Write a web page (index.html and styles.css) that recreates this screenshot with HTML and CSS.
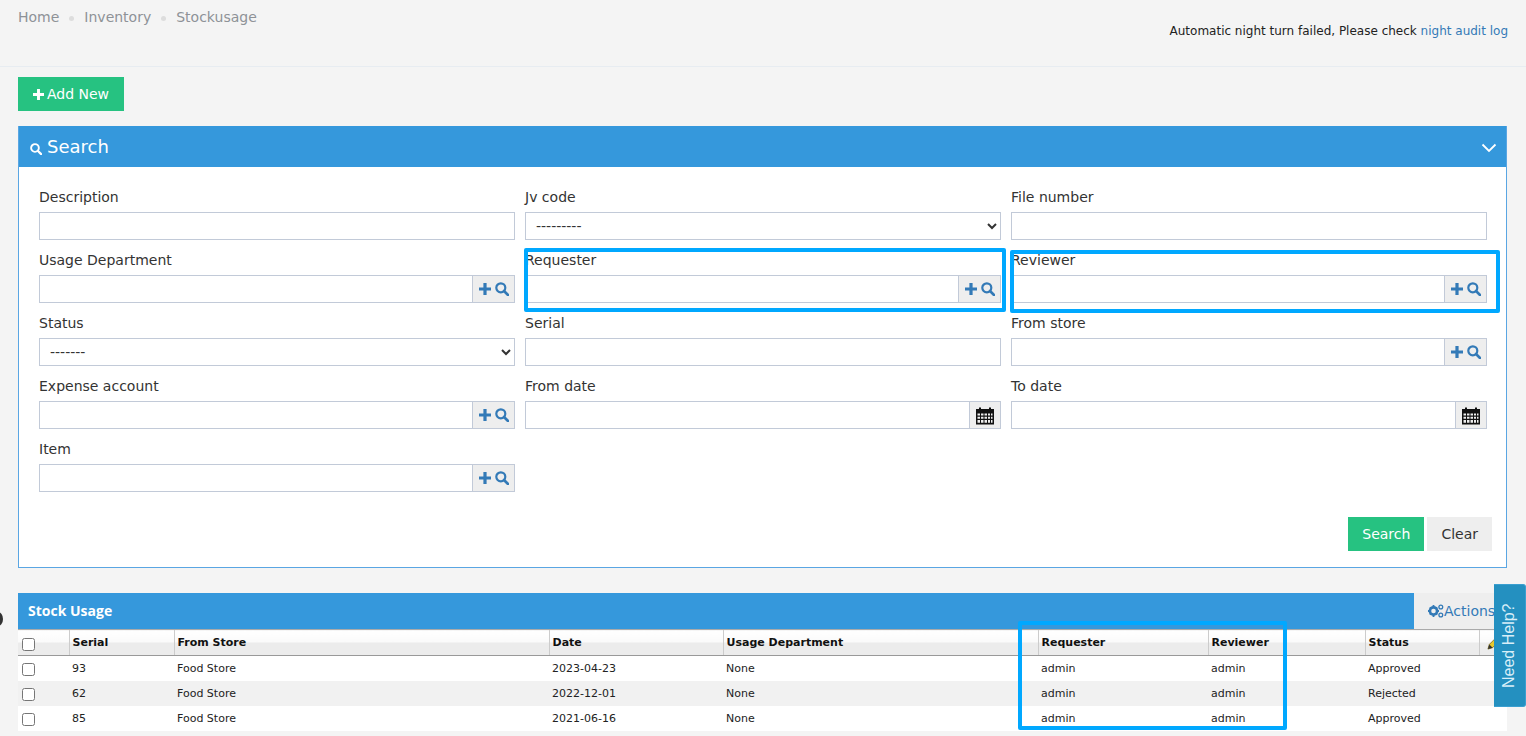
FILE: index.html
```html
<!DOCTYPE html>
<html lang="en">
<head>
  <meta charset="UTF-8">
  <title>Stockusage</title>
  <link rel="stylesheet" href="styles.css">
</head>
<body>
  <svg class="sprites" width="0" height="0" aria-hidden="true">
    <symbol id="i-plus" viewBox="0 0 12 12"><path d="M4.4 0h3.2v4.4H12v3.2H7.6V12H4.4V7.6H0V4.4h4.4z" fill="currentColor"/></symbol>
    <symbol id="i-search" viewBox="0 0 14 14"><circle cx="5.8" cy="5.8" r="4.5" fill="none" stroke="currentColor" stroke-width="2.2"/><path d="M9 9l4 4" stroke="currentColor" stroke-width="2.6" stroke-linecap="round"/></symbol>
    <symbol id="i-calendar" viewBox="0 0 18 18"><path d="M0 2.5h3V1h2v1.500h8V1h2v1.500h3V18H0z" fill="#111"/><path d="M1.500 7h2.500v2H1.500zM5 7h2.500v2H5zM8.500 7H11v2H8.500zM12 7h2v2h-2zM15 7h1.500v2H15zM1.500 10.200h2.500v2H1.500zM5 10.200h2.500v2H5zM8.500 10.200H11v2H8.500zM12 10.200h2v2h-2zM15 10.200h1.500v2H15zM1.500 13.400h2.500v2.800H1.500zM5 13.400h2.500v2.800H5zM8.500 13.400H11v2.800H8.500zM12 13.400h2v2.800h-2zM15 13.400h1.500v2.800H15z" fill="#eee"/></symbol>
    <symbol id="i-cogs" viewBox="0 0 16 14"><circle cx="5.500" cy="7" r="3.600" fill="none" stroke="currentColor" stroke-width="2.600"/><path d="M5.500 1v2M5.500 11v2M0 7h2M9 7h2M1.800 3.300l1.400 1.400M8 9.500l1.200 1.200M1.800 10.700l1.400-1.400M8 4.500l1.200-1.200" stroke="currentColor" stroke-width="1.800"/><circle cx="12.800" cy="3" r="1.900" fill="none" stroke="currentColor" stroke-width="1.300"/><circle cx="12.800" cy="11" r="1.900" fill="none" stroke="currentColor" stroke-width="1.300"/></symbol>
  </svg>

  <header class="page-head">
    <ul class="crumbs">
      <li>Home</li>
      <li>Inventory</li>
      <li>Stockusage</li>
    </ul>
    <p class="night-note">Automatic night turn failed, Please check <a href="#">night audit log</a></p>
  </header>

  <main class="content">
    <button class="btn btn-green btn-add"><svg class="ico-plus"><use href="#i-plus"/></svg>Add New</button>

    <section class="search-panel">
      <div class="search-title">
        <h2><svg class="ico-title"><use href="#i-search"/></svg>Search</h2>
        <svg class="chevron" viewBox="0 0 16 10"><path d="M1.500 1.500L8 8l6.500-6.500" fill="none" stroke="#fff" stroke-width="1.800"/></svg>
      </div>
      <form class="search-body">
        <div class="form-grid">
          <div class="field">
            <label>Description</label>
            <input type="text">
          </div>
          <div class="field">
            <label>Jv code</label>
            <select><option>---------</option></select>
          </div>
          <div class="field">
            <label>File number</label>
            <input type="text">
          </div>

          <div class="field">
            <label>Usage Department</label>
            <div class="input-group">
              <input type="text">
              <span class="addon"><svg class="ico-plus"><use href="#i-plus"/></svg><svg class="ico-search"><use href="#i-search"/></svg></span>
            </div>
          </div>
          <div class="field">
            <label>Requester</label>
            <div class="input-group">
              <input type="text">
              <span class="addon"><svg class="ico-plus"><use href="#i-plus"/></svg><svg class="ico-search"><use href="#i-search"/></svg></span>
            </div>
          </div>
          <div class="field">
            <label>Reviewer</label>
            <div class="input-group">
              <input type="text">
              <span class="addon"><svg class="ico-plus"><use href="#i-plus"/></svg><svg class="ico-search"><use href="#i-search"/></svg></span>
            </div>
          </div>

          <div class="field">
            <label>Status</label>
            <select><option>-------</option></select>
          </div>
          <div class="field">
            <label>Serial</label>
            <input type="text">
          </div>
          <div class="field">
            <label>From store</label>
            <div class="input-group">
              <input type="text">
              <span class="addon"><svg class="ico-plus"><use href="#i-plus"/></svg><svg class="ico-search"><use href="#i-search"/></svg></span>
            </div>
          </div>

          <div class="field">
            <label>Expense account</label>
            <div class="input-group">
              <input type="text">
              <span class="addon"><svg class="ico-plus"><use href="#i-plus"/></svg><svg class="ico-search"><use href="#i-search"/></svg></span>
            </div>
          </div>
          <div class="field">
            <label>From date</label>
            <div class="input-group">
              <input type="text">
              <span class="addon addon-date"><svg class="ico-cal"><use href="#i-calendar"/></svg></span>
            </div>
          </div>
          <div class="field">
            <label>To date</label>
            <div class="input-group">
              <input type="text">
              <span class="addon addon-date"><svg class="ico-cal"><use href="#i-calendar"/></svg></span>
            </div>
          </div>

          <div class="field">
            <label>Item</label>
            <div class="input-group">
              <input type="text">
              <span class="addon"><svg class="ico-plus"><use href="#i-plus"/></svg><svg class="ico-search"><use href="#i-search"/></svg></span>
            </div>
          </div>
        </div>
        <div class="form-actions">
          <button type="button" class="btn btn-green">Search</button>
          <button type="button" class="btn btn-grey">Clear</button>
        </div>
      </form>
    </section>

    <section class="usage">
      <div class="usage-bar">
        <h3>Stock Usage</h3>
        <a class="actions" href="#"><svg class="ico-cogs"><use href="#i-cogs"/></svg>Actions</a>
      </div>
      <table class="usage-table">
        <colgroup>
          <col class="c-check"><col class="c-serial"><col class="c-store"><col class="c-date"><col class="c-dept"><col class="c-req"><col class="c-rev"><col class="c-status"><col class="c-edit">
        </colgroup>
        <thead>
          <tr>
            <th><input type="checkbox"></th>
            <th>Serial</th>
            <th>From Store</th>
            <th>Date</th>
            <th>Usage Department</th>
            <th>Requester</th>
            <th>Reviewer</th>
            <th>Status</th>
            <th><svg class="ico-pencil" viewBox="0 0 16 16"><path d="M1 15l1.500-5L11 1.500 14.500 5 6 13.500z" fill="#e8c92c" stroke="#6b5a10" stroke-width=".8"/><path d="M1 15l1.500-5 3.500 3.500z" fill="#333"/></svg></th>
          </tr>
        </thead>
        <tbody>
          <tr>
            <td><input type="checkbox"></td><td>93</td><td>Food Store</td><td>2023-04-23</td><td>None</td><td>admin</td><td>admin</td><td>Approved</td><td></td>
          </tr>
          <tr>
            <td><input type="checkbox"></td><td>62</td><td>Food Store</td><td>2022-12-01</td><td>None</td><td>admin</td><td>admin</td><td>Rejected</td><td></td>
          </tr>
          <tr>
            <td><input type="checkbox"></td><td>85</td><td>Food Store</td><td>2021-06-16</td><td>None</td><td>admin</td><td>admin</td><td>Approved</td><td></td>
          </tr>
        </tbody>
      </table>
    </section>
  </main>

  <!-- annotation boxes drawn over the screenshot -->
  <div class="mark mark-requester"></div>
  <div class="mark mark-reviewer"></div>
  <div class="mark mark-columns"></div>

  <div class="edge-dot"></div>
  <a class="need-help" href="#">Need Help?</a>
</body>
</html>
```

FILE: styles.css
```css
html, body {
  height: 736px;
  overflow: hidden;
}
body {
  margin: 0;
  position: relative;
  background-color: #f4f4f4;
  color: #333;
  font-family: 'DejaVu Sans', sans-serif;
  font-size: 14px;
}
.sprites {
  position: absolute;
}
.page-head {
  height: 66px;
  box-sizing: content-box;
  border-bottom: 1px solid #e7ecf1;
  padding: 0 18px;
  display: flex;
  justify-content: space-between;
}
.crumbs {
  list-style: none;
  margin: 0;
  padding: 8px 0 0;
  display: flex;
  color: #8e9297;
  line-height: 18px;
}
.crumbs li + li::before {
  content: "";
  display: inline-block;
  width: 5px;
  height: 5px;
  border-radius: 50%;
  background-color: #ddd;
  margin: 0 10px;
  vertical-align: middle;
}
.night-note {
  margin: 22px 0 0;
  font-size: 12px;
  line-height: 18px;
  color: #222;
}
.night-note a {
  color: #337ab7;
  text-decoration: none;
}
.content {
  padding: 10px 19px 0 18px;
}
.btn {
  height: 34px;
  border: none;
  padding: 0 14px;
  font-family: inherit;
  font-size: 14px;
  cursor: pointer;
}
.btn-green {
  background-color: #26c281;
  color: #fff;
}
.btn-grey {
  background-color: #eee;
  color: #333;
}
.btn-add {
  display: block;
  width: 106px;
  padding: 0;
}
.btn-add .ico-plus {
  width: 11px;
  height: 11px;
  margin: 0 3px 0 0;
  color: #fff;
  vertical-align: -1px;
}
.search-panel {
  margin-top: 15px;
  border: 1px solid #5aa6e3;
  border-top: none;
  background-color: #fff;
}
.search-title {
  height: 41px;
  background-color: #3598dc;
  color: #fff;
  display: flex;
  align-items: center;
  justify-content: space-between;
  padding: 0 9px 0 11px;
}
.search-title h2 {
  margin: 0;
  font-size: 18px;
  font-weight: normal;
}
.ico-title {
  width: 12px;
  height: 12px;
  margin-right: 5px;
  color: #fff;
  vertical-align: -2px;
}
.chevron {
  width: 16px;
  height: 10px;
  margin-top: 2px;
}
.search-body {
  padding: 20px 19px 16px 20px;
}
.form-grid {
  display: grid;
  grid-template-columns: repeat(3, 476px);
  gap: 10px;
}
.field label {
  display: block;
  line-height: 20px;
  margin-bottom: 5px;
}
.field input[type=text],
.field select {
  display: block;
  width: 100%;
  height: 28px;
  box-sizing: border-box;
  border: 1px solid #c2cad8;
  background-color: #fff;
  font-family: inherit;
  font-size: 14px;
  color: #333;
  padding: 0 6px;
  border-radius: 0;
}
.input-group {
  display: flex;
}
.input-group input[type=text] {
  flex: 1;
  min-width: 0;
}
.addon {
  flex: none;
  width: 42px;
  height: 28px;
  box-sizing: border-box;
  border: 1px solid #c2cad8;
  border-left: none;
  background-color: #eee;
  display: flex;
  align-items: center;
  justify-content: center;
  gap: 4px;
  color: #337ab7;
}
.addon-date {
  width: 31px;
}
.ico-plus {
  width: 12px;
  height: 12px;
}
.ico-search {
  width: 14px;
  height: 14px;
}
.ico-cal {
  width: 18px;
  height: 19px;
}
.form-actions {
  display: flex;
  justify-content: flex-end;
  gap: 3px;
  margin: 25px -5px 0 0;
}
.usage {
  margin-top: 25px;
}
.usage-bar {
  height: 36px;
  display: flex;
  background-color: #3598dc;
  color: #fff;
}
.usage-bar h3 {
  flex: 1;
  margin: 0;
  padding-left: 10px;
  font-family: 'Open Sans', sans-serif;
  font-size: 14px;
  font-weight: bold;
  line-height: 36px;
}
.actions {
  width: 79px;
  padding-left: 14px;
  background-color: #eee;
  color: #337ab7;
  text-decoration: none;
  line-height: 36px;
}
.ico-cogs {
  width: 16px;
  height: 14px;
  vertical-align: -2px;
}
.usage-table {
  width: 100%;
  table-layout: fixed;
  border-collapse: collapse;
  font-size: 11px;
  background-color: #fff;
}
.c-check { width: 51px; }
.c-serial { width: 105px; }
.c-store { width: 375px; }
.c-date { width: 174px; }
.c-dept { width: 315px; }
.c-req { width: 170px; }
.c-rev { width: 157px; }
.c-status { width: 114px; }
.usage-table th {
  height: 26px;
  box-sizing: border-box;
  padding: 0 3px;
  text-align: left;
  color: #111;
  background: linear-gradient(#fff 0, #fafafa 50%, #ececec 50%, #ececec 100%);
  border-top: 1px solid #aaa;
  border-bottom: 1px solid #999;
  border-left: 1px solid #ccc;
  overflow: hidden;
  white-space: nowrap;
}
.usage-table th:first-child {
  border-left: none;
}
.usage-table td {
  height: 25px;
  box-sizing: border-box;
  padding: 0 3px;
  color: #222;
}
.usage-table tbody tr:nth-child(even) {
  background-color: #f1f1f1;
}
.usage-table input[type=checkbox] {
  display: block;
  width: 13px;
  height: 13px;
  margin: 3px 0 0 1px;
}
.ico-pencil {
  width: 15px;
  height: 15px;
  margin-left: 4px;
  vertical-align: middle;
}
.mark {
  position: absolute;
  box-sizing: border-box;
  border: 4px solid #00a8ff;
  border-radius: 2px;
  pointer-events: none;
}
.mark-requester {
  left: 524px;
  top: 248px;
  width: 482px;
  height: 64px;
}
.mark-reviewer {
  left: 1010px;
  top: 250px;
  width: 490px;
  height: 63px;
}
.mark-columns {
  left: 1018px;
  top: 621px;
  width: 269px;
  height: 109px;
}
.edge-dot {
  position: absolute;
  left: -7px;
  top: 612px;
  width: 10px;
  height: 14px;
  border-radius: 50%;
  background-color: #333;
}
.need-help {
  position: absolute;
  left: 1494px;
  top: 584px;
  width: 32px;
  height: 123px;
  box-sizing: border-box;
  background-color: #2490c0;
  border: 1px solid #3a9fd0;
  border-right: none;
  border-radius: 3px 0 0 3px;
  color: #d8eef8;
  font-family: 'Liberation Sans', sans-serif;
  font-size: 16px;
  text-decoration: none;
  writing-mode: vertical-rl;
  transform: rotate(180deg);
  text-align: center;
  line-height: 30px;
}
```
